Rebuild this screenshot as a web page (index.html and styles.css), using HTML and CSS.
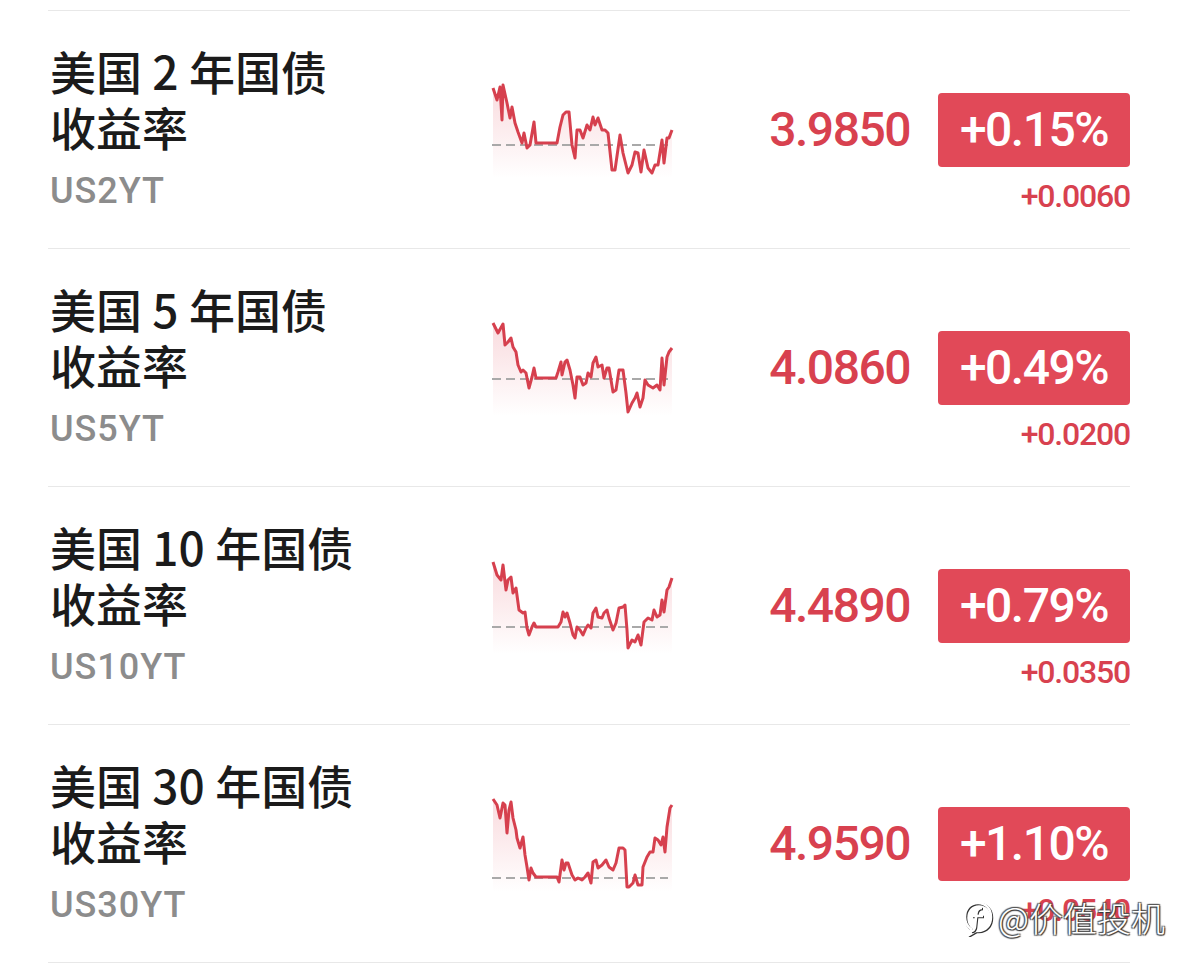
FILE: index.html
```html
<html>
<head>
  <title>美债收益率</title>
  <link rel="stylesheet" href="styles.css">
</head>
<body>
  <svg class="defs" width="0" height="0">
    <defs>
      <linearGradient id="fade" x1="0" y1="0" x2="0" y2="1">
        <stop offset="0" stop-color="#e24858" stop-opacity="0.2"/>
        <stop offset="1" stop-color="#e24858" stop-opacity="0"/>
      </linearGradient>
    </defs>
  </svg>

  <div class="list">

    <div class="row">
      <div class="name">
        <div class="title">美国 2 年国债<br>收益率</div>
        <div class="code">US2YT</div>
      </div>
      <svg class="chart" viewBox="490 79 190 100" width="190" height="100">
        <polygon class="area" points="493,88 497,100 500,87 502,120 503,85 507,103 510,118 512,107 515,123 518,132 522,143 524,133 527,148 530,145 534,122 536,143 557,143 560,127 563,115 566,112 569,112 572,145 575,158 577,130 580,130 583,138 587,125 590,130 593,117 595,125 598,118 602,130 605,130 608,133 612,170 615,170 620,135 623,153 628,173 632,165 635,152 638,153 641,172 644,150 648,168 652,173 655,165 658,165 662,140 664,163 667,138 669,138 672,130 672,178 493,178"/>
        <line class="base" x1="492" y1="145" x2="668" y2="145"/>
        <polyline class="line" points="493,88 497,100 500,87 502,120 503,85 507,103 510,118 512,107 515,123 518,132 522,143 524,133 527,148 530,145 534,122 536,143 557,143 560,127 563,115 566,112 569,112 572,145 575,158 577,130 580,130 583,138 587,125 590,130 593,117 595,125 598,118 602,130 605,130 608,133 612,170 615,170 620,135 623,153 628,173 632,165 635,152 638,153 641,172 644,150 648,168 652,173 655,165 658,165 662,140 664,163 667,138 669,138 672,130"/>
      </svg>
      <div class="price">3.9850</div>
      <div class="change">
        <div class="badge">+0.15%</div>
        <div class="delta">+0.0060</div>
      </div>
    </div>

    <div class="row">
      <div class="name">
        <div class="title">美国 5 年国债<br>收益率</div>
        <div class="code">US5YT</div>
      </div>
      <svg class="chart" viewBox="490 317 190 100" width="190" height="100">
        <polygon class="area" points="493,323 498,333 503,324 505,345 508,342 511,338 513,347 516,352 518,365 521,372 523,370 526,373 529,388 532,377 534,368 536,378 556,378 558,372 561,362 562,375 565,362 567,360 570,370 573,385 575,398 577,377 580,377 583,385 586,383 588,373 591,377 593,363 596,357 598,367 602,365 604,378 607,368 609,368 613,392 616,390 619,370 623,370 626,393 628,412 632,403 635,398 637,393 640,407 643,398 645,380 648,385 653,388 657,385 660,390 662,358 664,385 667,357 669,352 672,348 672,416 493,416"/>
        <line class="base" x1="492" y1="379" x2="668" y2="379"/>
        <polyline class="line" points="493,323 498,333 503,324 505,345 508,342 511,338 513,347 516,352 518,365 521,372 523,370 526,373 529,388 532,377 534,368 536,378 556,378 558,372 561,362 562,375 565,362 567,360 570,370 573,385 575,398 577,377 580,377 583,385 586,383 588,373 591,377 593,363 596,357 598,367 602,365 604,378 607,368 609,368 613,392 616,390 619,370 623,370 626,393 628,412 632,403 635,398 637,393 640,407 643,398 645,380 648,385 653,388 657,385 660,390 662,358 664,385 667,357 669,352 672,348"/>
      </svg>
      <div class="price">4.0860</div>
      <div class="change">
        <div class="badge">+0.49%</div>
        <div class="delta">+0.0200</div>
      </div>
    </div>

    <div class="row">
      <div class="name">
        <div class="title">美国 10 年国债<br>收益率</div>
        <div class="code">US10YT</div>
      </div>
      <svg class="chart" viewBox="490 555 190 100" width="190" height="100">
        <polygon class="area" points="493,562 497,575 501,580 503,565 506,590 508,580 511,577 513,593 516,588 519,610 523,613 525,612 527,628 529,635 532,627 534,623 536,627 558,627 561,622 563,612 565,617 567,613 570,623 573,635 575,638 577,627 580,630 583,635 586,628 588,625 591,628 593,613 596,608 598,617 602,618 604,613 607,610 609,618 613,630 616,623 619,608 623,607 625,605 627,630 628,648 632,640 635,642 638,635 641,645 644,622 648,618 652,620 654,610 657,617 660,615 662,600 664,612 667,590 669,587 672,578 672,654 493,654"/>
        <line class="base" x1="492" y1="627" x2="668" y2="627"/>
        <polyline class="line" points="493,562 497,575 501,580 503,565 506,590 508,580 511,577 513,593 516,588 519,610 523,613 525,612 527,628 529,635 532,627 534,623 536,627 558,627 561,622 563,612 565,617 567,613 570,623 573,635 575,638 577,627 580,630 583,635 586,628 588,625 591,628 593,613 596,608 598,617 602,618 604,613 607,610 609,618 613,630 616,623 619,608 623,607 625,605 627,630 628,648 632,640 635,642 638,635 641,645 644,622 648,618 652,620 654,610 657,617 660,615 662,600 664,612 667,590 669,587 672,578"/>
      </svg>
      <div class="price">4.4890</div>
      <div class="change">
        <div class="badge">+0.79%</div>
        <div class="delta">+0.0350</div>
      </div>
    </div>

    <div class="row">
      <div class="name">
        <div class="title">美国 30 年国债<br>收益率</div>
        <div class="code">US30YT</div>
      </div>
      <svg class="chart" viewBox="490 793 190 100" width="190" height="100">
        <polygon class="area" points="493,799 497,805 500,818 503,803 505,805 507,833 509,810 511,802 513,818 516,830 517,838 520,848 523,837 525,855 527,867 529,880 531,868 533,873 536,877 557,877 559,882 562,860 564,870 566,863 568,863 572,875 575,880 578,878 582,880 585,877 588,873 591,883 593,862 596,860 598,868 602,865 606,860 609,867 613,870 616,863 619,848 623,848 625,850 627,887 629,887 633,883 635,875 638,885 642,885 643,867 647,857 650,852 653,852 655,838 658,840 661,845 663,837 665,852 667,827 670,808 672,805 672,892 493,892"/>
        <line class="base" x1="492" y1="878" x2="668" y2="878"/>
        <polyline class="line" points="493,799 497,805 500,818 503,803 505,805 507,833 509,810 511,802 513,818 516,830 517,838 520,848 523,837 525,855 527,867 529,880 531,868 533,873 536,877 557,877 559,882 562,860 564,870 566,863 568,863 572,875 575,880 578,878 582,880 585,877 588,873 591,883 593,862 596,860 598,868 602,865 606,860 609,867 613,870 616,863 619,848 623,848 625,850 627,887 629,887 633,883 635,875 638,885 642,885 643,867 647,857 650,852 653,852 655,838 658,840 661,845 663,837 665,852 667,827 670,808 672,805"/>
      </svg>
      <div class="price">4.9590</div>
      <div class="change">
        <div class="badge">+1.10%</div>
        <div class="delta">+0.0540</div>
      </div>
    </div>

  </div>

  <div class="watermark">
    <svg class="logo" viewBox="0 0 32 38" width="32" height="38">
      <path d="M16 4 C8 4 3 10 3 18 C3 24 6 28 9 30 L7 36 L14 32 C15 32 15.5 32 16 32 C24 32 29 26 29 18 C29 10 24 4 16 4 Z"/>
      <path d="M20 9 C16 9 15 11 14.5 14 L13 28 C12.5 31 11 32 9 32 M10 17 L21 17"/>
    </svg>
    <span>@价值投机</span>
  </div>
</body>
</html>
```

FILE: styles.css
```css
body {
  margin: 0;
  background-color: #ffffff;
  font-family: 'Noto Sans CJK SC', 'Noto Sans', sans-serif;
  position: relative;
  height: 973px;
  overflow: hidden;
}

.defs {
  position: absolute;
}

.list {
  margin: 10px 49px 0 48px;
}

.row {
  display: flex;
  align-items: flex-start;
  height: 237px;
  border-top: 1px solid #e8e8e8;
}

.row:last-child {
  border-bottom: 1px solid #e8e8e8;
}

.name {
  box-sizing: border-box;
  width: 442px;
  padding-top: 31px;
  padding-left: 2px;
}

.title {
  font-size: 46px;
  line-height: 56px;
  font-weight: 500;
  color: #1b1b1b;
}

.code {
  margin-top: 15px;
  font-family: Roboto, 'Noto Sans', sans-serif;
  font-size: 36px;
  line-height: 44px;
  font-weight: 500;
  letter-spacing: 1px;
  color: #8c8c8c;
}

.chart {
  margin-top: 68px;
  flex: none;
}

.chart .line {
  fill: none;
  stroke: #d6404e;
  stroke-width: 3;
  stroke-linejoin: round;
}

.chart .area {
  fill: url(#fade);
  stroke: none;
}

.chart .base {
  stroke: #a9a9a9;
  stroke-width: 2;
  stroke-dasharray: 9 5;
}

.price {
  flex: 1;
  margin-top: 82px;
  padding-right: 28px;
  text-align: right;
  font-family: Roboto, sans-serif;
  font-size: 48px;
  line-height: 74px;
  font-weight: 500;
  letter-spacing: -1.5px;
  color: #d8414f;
}

.change {
  width: 192px;
  margin-top: 82px;
  display: flex;
  flex-direction: column;
  align-items: flex-end;
}

.badge {
  width: 192px;
  height: 74px;
  border-radius: 4px;
  background-color: #e14958;
  color: #ffffff;
  text-align: center;
  font-family: Roboto, sans-serif;
  font-size: 48px;
  line-height: 74px;
  font-weight: 500;
  letter-spacing: -1.5px;
}

.delta {
  margin-top: 11px;
  font-family: Roboto, sans-serif;
  font-size: 32px;
  line-height: 36px;
  font-weight: 500;
  letter-spacing: -1.2px;
  color: #d8414f;
}

.watermark {
  position: absolute;
  left: 962px;
  top: 893px;
  display: flex;
  align-items: center;
  gap: 4px;
}

.watermark span {
  font-size: 34px;
  line-height: 50px;
  font-weight: 300;
  color: #ffffff;
  text-shadow: 1px 1px 1px #333, -1px -1px 1px #555, 1px -1px 1px #555, -1px 1px 1px #555;
}

.logo path {
  fill: none;
  stroke: #ffffff;
  stroke-width: 2.5;
  filter: drop-shadow(1px 1px 0.6px #333);
}
```
